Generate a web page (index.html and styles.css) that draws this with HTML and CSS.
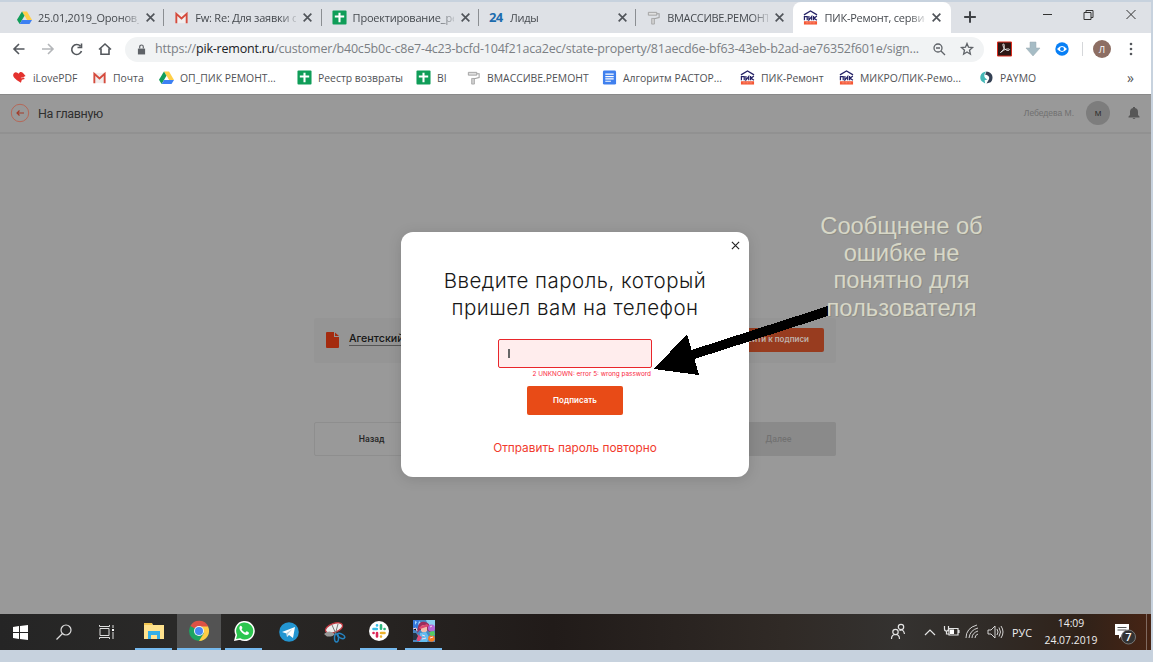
FILE: index.html
```html
<!DOCTYPE html>
<html lang="ru">
<head>
<meta charset="utf-8">
<title>ПИК-Ремонт, сервис</title>
<link rel="stylesheet" href="styles.css">
</head>
<body>
<svg class="defs" aria-hidden="true">
  <symbol id="drive" viewBox="0 0 16 16"><path d="M5.3 1.5 10.7 1.5 16 10.6 10.8 10.6z" fill="#ffcf48"/><path d="M5.3 1.5 8 6.1 2.8 15 0 10.4z" fill="#119d59"/><path d="M5.4 10.6H16L13.3 15H2.8z" fill="#3d80f3"/></symbol>
  <symbol id="gmail" viewBox="0 0 16 16"><path d="M2 3h12v11H2z" fill="#f1eeee"/><path d="M2.500 14V4L8 9l5.500-5v10" fill="none" stroke="#d54b3d" stroke-width="2"/></symbol>
  <symbol id="sheet" viewBox="0 0 16 16"><rect x=".5" y=".5" width="15" height="15" rx="1" fill="#0f9d58"/><path d="M3 7h10M8 3v10" stroke="#fff" stroke-width="2.2"/></symbol>
  <symbol id="docs" viewBox="0 0 16 16"><rect x="1" y=".5" width="14" height="15" rx="1.5" fill="#4080ee"/><path d="M3.5 4.5h9M3.5 7h9M3.5 9.5h9M3.5 12h6" stroke="#fff" stroke-width="1.3"/></symbol>
  <symbol id="roller" viewBox="0 0 16 16"><path d="M2.500 2.500h9v3h-9z" fill="#e0e0e0" stroke="#a0a0a0"/><path d="M11.500 4H14v4L7.500 9.500" fill="none" stroke="#a0a0a0" stroke-width="1.100"/><path d="M6 9h3v6H6z" fill="#cfcfcf" stroke="#a0a0a0" stroke-width=".8"/></symbol>
  <symbol id="pik" viewBox="0 0 16 16"><path d="M1 5.200 8 1l7 4.200" fill="none" stroke="#252266" stroke-width="1.300"/><path d="M1.500 11V7h3v4M6.300 6.500v4.200L9.300 7v4M11.300 6.500V11M14.800 6.500l-3 2.300 3 2.200" fill="none" stroke="#252266" stroke-width="1.300"/><path d="M1 12h14v3.500H1z" fill="#f45532"/><path d="M3 13.700h10" stroke="#ffb09d" stroke-width=".8" stroke-dasharray="1 .5"/></symbol>
  <symbol id="close" viewBox="0 0 10 10"><path d="m1.500 1.500 7 7m0-7-7 7" stroke="#50545a" stroke-width="1.500" fill="none"/></symbol>
</svg>
<div class="screen">
  <nav class="tabs">
    <div class="tab"><svg class="ico"><use href="#drive"/></svg><span class="tab-name">25.01,2019_Оронов_</span><svg class="x"><use href="#close"/></svg></div>
    <div class="tab"><svg class="ico"><use href="#gmail"/></svg><span class="tab-name">Fw: Re: Для заявки о</span><svg class="x"><use href="#close"/></svg></div>
    <div class="tab"><svg class="ico"><use href="#sheet"/></svg><span class="tab-name">Проектирование_ре</span><svg class="x"><use href="#close"/></svg></div>
    <div class="tab"><b class="ico b24">24</b><span class="tab-name">Лиды</span><svg class="x"><use href="#close"/></svg></div>
    <div class="tab last"><svg class="ico"><use href="#roller"/></svg><span class="tab-name tight">ВМАССИВЕ.РЕМОНТ</span><svg class="x"><use href="#close"/></svg></div>
    <div class="tab active"><svg class="ico"><use href="#pik"/></svg><span class="tab-name">ПИК-Ремонт, сервис</span><svg class="x"><use href="#close"/></svg></div>
    <svg class="plus" viewBox="0 0 12 12"><path d="M6 1v10M1 6h10" stroke="#3f4246" stroke-width="1.700"/></svg>
    <svg class="winctl" viewBox="0 0 100 14" fill="none" stroke="#333" stroke-width="1"><path d="M4 6.500h9M45 4.500h7v7h-7zM47 4.500v-2h7v7h-2M87.500 2l9 9m0-9-9 9"/></svg>
  </nav>
  <div class="toolbar">
    <svg class="nav" viewBox="0 0 110 16" fill="none" stroke="#54585d" stroke-width="1.600"><path d="M13.500 8H3M8 3 3 8l5 5"/><path d="M31 8h10.500M37 3l5 5-5 5" stroke="#b4b6b9"/><path d="M69.500 5.200A5 5 0 1 0 70.500 10M70.500 2.500v4h-4"/><path d="M88 8.500 94 3l6 5.500M90 7.500v5.700h8V7.500"/></svg>
    <div class="address">
      <svg class="lock" viewBox="0 0 10 12"><path d="M1 5h8v6.500H1z" fill="#5f6368"/><path d="M3 5V3a2 2 0 0 1 4 0v2" fill="none" stroke="#5f6368" stroke-width="1.300"/></svg>
      <span class="url">https://<em>pik-remont.ru</em>/customer/b40c5b0c-c8e7-4c23-bcfd-104f21aca2ec/state-property/81aecd6e-bf63-43eb-b2ad-ae76352f601e/sign...</span>
      <svg class="addr-icons" viewBox="0 0 46 16" fill="none" stroke="#5f6368" stroke-width="1.300"><circle cx="7" cy="7" r="4"/><path d="m10 10 4 4M5 7h4M36 2.500l1.500 3.700 4 .3-3 2.700.9 4L36 11l-3.400 2.200.9-4-3-2.700 4-.3z"/></svg>
    </div>
    <svg class="ext" viewBox="0 0 150 24"><path d="M.500 5h14v14H.5z" fill="#2d1715" stroke="#db2c1e"/><path d="M3.500 15.500c3-1.500 4.500-6 3.500-8s-2 1 .5 4 5 2 5 1-5-1-9 3z" fill="none" stroke="#eee"/><path d="M33 5h6v6h4l-7 8-7-8h4z" fill="#a6bcc5" stroke="#9aabb1" stroke-width=".5"/><circle cx="65" cy="12" r="6.700" fill="#087ff5"/><path d="M60 12q5-6 10 0-5 6-10 0" fill="#fff"/><circle cx="65" cy="12" r="2" fill="#087ff5"/><path d="M85.500 5v14" stroke="#d5d7da"/><circle cx="105" cy="12" r="9" fill="#8d6e63"/><g fill="#55585d"><circle cx="134" cy="7" r="1.300"/><circle cx="134" cy="12" r="1.300"/><circle cx="134" cy="17" r="1.300"/></g><text x="105" y="15.500" text-anchor="middle" class="profile">Л</text></svg>
  </div>
  <div class="bookmarks">
    <div class="bm"><svg class="ico" viewBox="0 0 16 16"><path d="M7 12C2 9 0 6 2 3.500c2-2 4-.5 5 .5 1-2 3-2.500 4.500-1l3 3.500-2 1 1 2-3 1-1 3z" fill="#e4322e"/><path d="m9.500 8.500 5-1" stroke="#fff" stroke-width=".6"/></svg><span>iLovePDF</span></div>
    <div class="bm"><svg class="ico"><use href="#gmail"/></svg><span>Почта</span></div>
    <div class="bm"><svg class="ico"><use href="#drive"/></svg><span>ОП_ПИК РЕМОНТ...</span></div>
    <div class="bm"><svg class="ico"><use href="#sheet"/></svg><span>Реестр возвраты</span></div>
    <div class="bm"><svg class="ico"><use href="#sheet"/></svg><span>BI</span></div>
    <div class="bm"><svg class="ico"><use href="#roller"/></svg><span>ВМАССИВЕ.РЕМОНТ</span></div>
    <div class="bm"><svg class="ico"><use href="#docs"/></svg><span>Алгоритм РАСТОР...</span></div>
    <div class="bm"><svg class="ico"><use href="#pik"/></svg><span>ПИК-Ремонт</span></div>
    <div class="bm"><svg class="ico"><use href="#pik"/></svg><span>МИКРО/ПИК-Ремо...</span></div>
    <div class="bm"><svg class="ico" viewBox="0 0 16 16"><path d="M8 1.500C1 2 0 9 3 12l3.500 2.500L6 11l3-1C5 8.500 4.500 4.500 8 1.500" fill="#43b7b6"/><path d="M8 1.500c7 .5 8 8 4.500 11.500L8 14.500 10.500 10C12 7 9 5 6.500 5z" fill="#344154"/></svg><span>PAYMO</span></div>
    <div class="more">»</div>
  </div>
  <main class="page">
    <header class="site-head">
      <svg class="back" viewBox="0 0 20 20" fill="none" stroke="#b56858"><circle cx="10" cy="10" r="8.700"/><path d="M14 10H7m2.500-2.500L7 10l2.500 2.500" stroke="#a23c2a" stroke-width="1.200"/></svg>
      <span class="home">На главную</span>
      <span class="user">Лебедева М.</span>
      <span class="avatar">М</span>
      <svg class="bell" viewBox="0 0 12 14"><path d="M5 1h2v1q3 .7 3 4v3l1.500 1.500v1H.5v-1L2 9V6q0-3.300 3-4zM4.500 12h3q-1.500 2-3 0" fill="#575757"/></svg>
    </header>
    <section class="doc">
      <svg class="file" viewBox="0 0 13 16"><path d="M1 0h7v5h5v10q0 1-1 1H1q-1 0-1-1V1q0-1 1-1m8 .5L13 4H9z" fill="#a42b0f"/></svg>
      <span class="doc-name">Агентский</span>
      <span class="sign">Перейти к подписи</span>
    </section>
    <section class="actions"><span class="prev">Назад</span><span class="next">Далее</span></section>
    <section class="modal">
      <svg class="modal-x" viewBox="0 0 10 10"><path d="m1 1 8 8m0-8-8 8" stroke="#222" stroke-width="1.300"/></svg>
      <h1>Введите пароль, который<br>пришел вам на телефон</h1>
      <div class="field"><i class="caret"></i></div>
      <div class="error">2 UNKNOWN: error 5: wrong password</div>
      <div class="submit">Подписать</div>
      <div class="resend">Отправить пароль повторно</div>
    </section>
    <svg class="arrow" viewBox="0 0 176 72" shape-rendering="crispEdges"><path d="M0 63 33 28l4.500 16L174 0v10L40.500 53l4.500 16z"/></svg>
    <p class="note">Сообщнене об<br>ошибке не<br>понятно для<br>пользователя</p>
  </main>
  <footer class="taskbar">
    <div class="task"><svg viewBox="0 0 24 24"><path d="m4 7 6-1v6H4zm7-1 8-1v7h-8zM4 13h6v6l-6-1zm7 0h8v7l-8-1z" fill="#fff"/></svg></div>
    <div class="task"><svg viewBox="0 0 24 24" fill="none" stroke="#ddd" stroke-width="1.200"><circle cx="14" cy="10" r="5"/><path d="m10.500 13.500-6 6"/></svg></div>
    <div class="task"><svg viewBox="0 0 24 24" fill="none" stroke="#ddd"><path d="M5 8.500h9v7H5zM4.500 5v1.500h10V5M4.500 19v-1.500h10V19M18 5v3M18 12v7"/><path d="M17 9h2v2h-2z" fill="#fff" stroke="none"/></svg></div>
    <div class="task open"><svg viewBox="0 0 24 24"><path d="M2 4h8l1 2h11v14H2z" fill="#ffe28d"/><path d="M2 4h8v2H2z" fill="#f1c550"/><path d="M6 12h12v8h-3v-4H9v4H6z" fill="#31aee8"/></svg></div>
    <div class="task open current"><svg viewBox="0 0 24 24"><circle cx="12" cy="12" r="10" fill="#1da462"/><path d="M12 12 3.400 7A10 10 0 0 1 21.500 8H12z" fill="#dd5144"/><path d="M12 7.500h9A10 10 0 0 1 12 22l5-8z" fill="#ffcd46"/><circle cx="12" cy="12" r="5" fill="#f5f5f5"/><circle cx="12" cy="12" r="4" fill="#4689f2"/></svg></div>
    <div class="task open"><svg viewBox="0 0 24 24"><path d="m3 21 1.300-5A9.300 9.300 0 1 1 8 20z" fill="#2cc64f" stroke="#fff" stroke-width="1.500"/><path d="M8 7q1.500-1 2.500 2l-1 1.300q1.200 2.500 3.700 3.500l1.300-1.500q3.500 1 2 3-2.500 2-6.500-1.500-4-4-2-6.800" fill="#fff"/></svg></div>
    <div class="task"><svg viewBox="0 0 24 24"><circle cx="12" cy="12" r="9.800" fill="#2395d1"/><path d="m5 12 13-5-2 11-4-3-2 2-.5-3.500z" fill="#fff"/><path d="m9.500 13 6-4-4.500 5-1 3z" fill="#b5cfdd"/></svg></div>
    <div class="task"><svg viewBox="0 0 24 24"><ellipse cx="12" cy="8" rx="9" ry="4.500" transform="rotate(-20 12 8)" fill="#eee" stroke="#be3840" stroke-width="1.300"/><path d="M2 14q5-5 11 0-2 3-8 2.500z" fill="#999"/><path d="m10 5 4 9m2-10-3 11" stroke="#777"/><g fill="none" stroke="#2584c2" stroke-width="1.500"><ellipse cx="14.500" cy="18" rx="2" ry="4"/><ellipse cx="19" cy="16" rx="4" ry="2" transform="rotate(25 19 16)"/></g></svg></div>
    <div class="task open"><svg viewBox="0 0 24 24"><circle cx="12" cy="12" r="10" fill="#fff"/><g fill="none" stroke-width="2.600" stroke-linecap="round"><path d="M6.500 10h3.300M10 6.300v.1" stroke="#37bde8"/><path d="M14 6.300v3.500M17.500 10h.1" stroke="#2eb67d"/><path d="M14 14h3.500M14 17.500v.1" stroke="#ecb22e"/><path d="M10 14v3.500M6.500 14h.1" stroke="#dc2859"/></g></svg></div>
    <div class="task open"><svg viewBox="0 0 24 24"><path d="M1 1h22v22H1z" fill="#4a86c0"/><path d="M1 1h7L5 9l-4 3z" fill="#3678dc"/><path d="m3 2 2 1-2 3zm4 0 2 2-3 2z" fill="#a8d9ff"/><path d="M14 1h9v8l-7-3z" fill="#8bd0f0"/><path d="M6 8q1-6 7-5 5 1 5 6l1 5-4-3H8l-3 3z" fill="#9e2d5c"/><path d="M9 7q4-2 6 1v4q-3 3-6 0z" fill="#f2c0ae"/><path d="m7 8 8-3 2 2-9 3z" fill="#dd4870"/><path d="m8 14 6-1 3 5-2 5H7z" fill="#62bdf0"/><path d="m5 15 5 3-2 4H5z" fill="#df4b78"/><path d="M1 14h3l2 3-2 4H1z" fill="#263442"/><circle cx="19.500" cy="19.500" r="3.300" fill="#f47c24"/><circle cx="19.500" cy="9" r="3.500" fill="#b565d5"/><path d="m17 13 5-1 1 4-4 1z" fill="#55cc61"/><path d="m18 19 3-1M18 8l2-1m-10 9 3 1m-3 3 4-1M1 10l3-1 1 3" stroke="#ffd9e8"/></svg></div>
    <svg class="tray" viewBox="0 0 120 24" fill="none" stroke="#e4e4e4" stroke-width="1.200"><circle cx="5.500" cy="12" r="2.700"/><path d="M1.500 19q0-4.500 4-4.500t4 4.500"/><circle cx="11" cy="7" r="2.700"/><path d="M9.500 10.500q4-2 5 3.500M35 15l5-5 5 5"/><path d="M59 8.500h9v6.500h-9zM54.500 6v3q0 2 2 2t2-2V6M56.500 11v3h2M69 10v3"/><path d="M60 9.500h4v4.500h-4z" fill="#fff" stroke="none"/><path d="M79 18q1-8 9-10M82 18q0-5 6-7M85 18q0-3 3-4M76 18Q76 8 87 5" stroke-width=".9"/><path d="M98 10h3l4-4v12l-4-4h-3zM107 9q2 3 0 6M109 7.500q3 4.500 0 9M111 6q4 6 0 12" stroke-width=".9"/></svg>
    <span class="lang">РУС</span>
    <div class="clock"><span>14:09</span><span>24.07.2019</span></div>
    <svg class="notify" viewBox="0 0 26 26"><path d="M2 5h14v11H9l-3 4v-4H2z" fill="#fff"/><path d="M4.500 8.500h9M4.500 11h9" stroke="#555"/><circle cx="15.500" cy="18" r="7" fill="#333" stroke="#777"/><text x="15.500" y="22" text-anchor="middle" class="count">7</text></svg>
  </footer>
</div>
</body>
</html>
```
FILE: styles.css
```css
* { box-sizing: border-box; }
body { margin: 0; width: 1153px; height: 662px; overflow: hidden; background: #c7d2de; font-family: "Open Sans", "Noto Sans", sans-serif; }
.defs { display: none; }
svg { display: block; flex: none; }
.screen { width: 1151px; margin-top: 2px; height: 648px; display: flex; flex-direction: column; background: #fff; }
.ico { width: 15px; height: 15px; flex: none; }
.tabs { height: 31px; flex: none; display: flex; background: #dee1e6; padding-left: 7px; }
.tab { width: 157.300px; flex: none; display: flex; align-items: center; padding: 0 0 0 10px; position: relative; }
.tab:not(.last):not(.active)::after { content: ""; width: 1px; height: 17px; background: #8b8e92; position: absolute; right: 0; top: 7px; }
.tab-name { width: 101px; margin-left: 6px; font-size: 11px; letter-spacing: -.220px; line-height: 20px; white-space: nowrap; color: #45494e; -webkit-mask-image: linear-gradient(90deg, #000 84%, #0003); mask-image: linear-gradient(90deg, #000 84%, #0003); }
.tab-name.tight { letter-spacing: -.300px; }
.tab .x { width: 11px; height: 11px; margin-left: 6px; }
.active { background: #fff; border-radius: 8px 8px 0 0; }
.b24 { color: #1c6cae; font-size: 13px; line-height: 15px; letter-spacing: -.500px; }
.plus { width: 14px; height: 14px; margin: 8px 0 0 12px; }
.winctl { width: 100px; height: 14px; margin: 6px 0 0 62px; }
.toolbar { height: 32px; flex: none; display: flex; align-items: center; padding-left: 11px; }
.nav { width: 110px; height: 16px; }
.address { width: 859px; height: 25px; border-radius: 13px; margin-left: 4px; background: #f1f3f4; display: flex; align-items: center; padding-left: 12px; }
.lock { width: 9px; height: 11px; }
.url { width: 768px; margin-left: 9px; font-size: 12.500px; letter-spacing: -.205px; line-height: 20px; white-space: nowrap; color: #7b7f84; }
.url em { font-style: normal; color: #202124; }
.addr-icons { width: 46px; height: 16px; margin-left: 8px; }
.ext { width: 150px; height: 24px; margin-left: 13px; }
.profile { fill: #fff; font-size: 9px; }
.bookmarks { height: 29px; flex: none; padding: 0 0 4px 11px; display: grid; grid-template-columns: 80px 67px 138px 119px 50px 136px 138px 99px 140px 139px 20px; align-items: center; }
.bm { display: flex; align-items: center; gap: 6px; font-size: 10.400px; line-height: 18px; white-space: nowrap; color: #505256; padding-left: 1px; }
.bm .ico { width: 15px; height: 15px; }
.more { font-size: 14px; line-height: 16px; padding-left: 10px; color: #555; }
.page { height: 520px; flex: none; position: relative; background: #999; box-shadow: inset 0 1px #898989; font-family: "Liberation Sans", sans-serif; }
.site-head { height: 40px; border-bottom: 2px solid #919191; display: flex; align-items: center; padding: 0 11px 0 10px; }
.back { width: 20px; height: 20px; }
.home { margin-left: 8px; font-family: Roboto, sans-serif; font-size: 12.500px; letter-spacing: -.350px; color: #303030; }
.user { margin-left: auto; font-size: 8.500px; color: #707070; }
.avatar { width: 24px; height: 24px; margin: 0 18px 0 12px; border-radius: 50%; background: #7d7d7d; color: #292929; font-size: 8px; display: grid; place-items: center; }
.bell { width: 12px; height: 14px; }
.doc { width: 522px; height: 45px; margin: 184px 0 0 314px; background: #959595; border-radius: 3px; display: flex; align-items: center; padding: 0 12px 2px; }
.file { width: 13px; height: 16px; }
.doc-name { margin-left: 10px; font: 500 10.700px/12px Inter, sans-serif; border-bottom: 1px solid #555; color: #161616; }
.sign { width: 98px; height: 24px; margin-left: auto; padding-right: 15px; border-radius: 2px; background: #983c1f; color: #bfb3ad; font: 600 8px/22px Inter, sans-serif; text-align: right; white-space: nowrap; }
.actions { width: 522px; height: 34px; margin: 59px 0 0 314px; display: flex; justify-content: space-between; font: 500 8.800px/32px Roboto, sans-serif; text-align: center; }
.prev { width: 115px; border: 1px solid #8e8e8e; border-radius: 2px; color: #252525; }
.next { width: 115px; border-radius: 2px; background: #8a8a8a; color: #727272; line-height: 34px; }
.modal { position: absolute; left: 401px; top: 138px; width: 348px; height: 245px; border-radius: 12px; background: #fff; box-shadow: 0 2px 14px #0002; display: flex; flex-direction: column; align-items: center; padding-top: 35px; font-family: Inter, sans-serif; }
.modal-x { width: 9px; height: 9px; position: absolute; right: 9px; top: 9px; }
h1 { margin: 0; text-align: center; font: 300 20.500px/27px Inter, sans-serif; letter-spacing: .480px; color: #171717; white-space: nowrap; }
.field { width: 154px; height: 29px; flex: none; margin-top: 18px; border: 1px solid #e9262b; border-radius: 2px; background: #ffeded; padding: 9px; }
.caret { display: block; width: 2px; height: 9px; background: #666; }
.error { width: 154px; margin-top: 1px; padding-right: 1px; text-align: right; color: #fa2742; font-size: 6.400px; line-height: 10px; white-space: nowrap; }
.submit { width: 96px; height: 29px; flex: none; margin-top: 7px; border-radius: 2px; background: #e84b17; color: #fff; font-size: 8px; font-weight: 600; line-height: 28px; text-align: center; }
.resend { margin-top: 24px; color: #f13b2d; font-size: 11.800px; line-height: 18px; white-space: nowrap; }
.arrow { position: absolute; left: 654px; top: 212px; width: 176px; height: 72px; }
.note { position: absolute; left: 801px; top: 119px; width: 201px; margin: 0; text-align: center; font-size: 23.700px; line-height: 27.200px; color: #d7d7c7; text-shadow: 1px 1px #8d8d86; }
.taskbar { height: 36px; flex: none; display: flex; align-items: center; background: linear-gradient(90deg, #252525 0, #2a2928 15%, #262321 34%, #211b19 48%, #302a26 68%, #343230 78%, #302b27 86%, #302219 94%, #472414); color: #eee; }
.taskbar::after { content: ""; width: 1px; height: 36px; margin-left: auto; margin-right: 4px; background: #806a60; }
.task { width: 37px; height: 36px; flex: none; display: grid; place-items: center; margin-right: 8px; }
.task:nth-child(1) { margin-left: 2px; margin-right: 6px; }
.task:nth-child(2) { margin-right: 6px; }
.task:nth-child(3) { margin-right: 10px; }
.task:nth-child(4) { margin-right: 5px; }
.task svg { width: 24px; height: 24px; }
.open { border-bottom: 2px solid #76b9ed; }
.current { width: 44px; background: #535353; margin-right: 4px; }
.tray { width: 120px; height: 24px; margin-left: 440px; }
.lang { font-size: 10.800px; width: 21px; margin-left: 2px; }
.clock { display: flex; flex-direction: column; align-items: center; width: 58px; margin-left: 9px; font-size: 10.400px; line-height: 17px; }
.notify { width: 26px; height: 26px; margin-left: 13px; }
.count { fill: #fff; font-size: 11px; font-weight: 600; }
```
